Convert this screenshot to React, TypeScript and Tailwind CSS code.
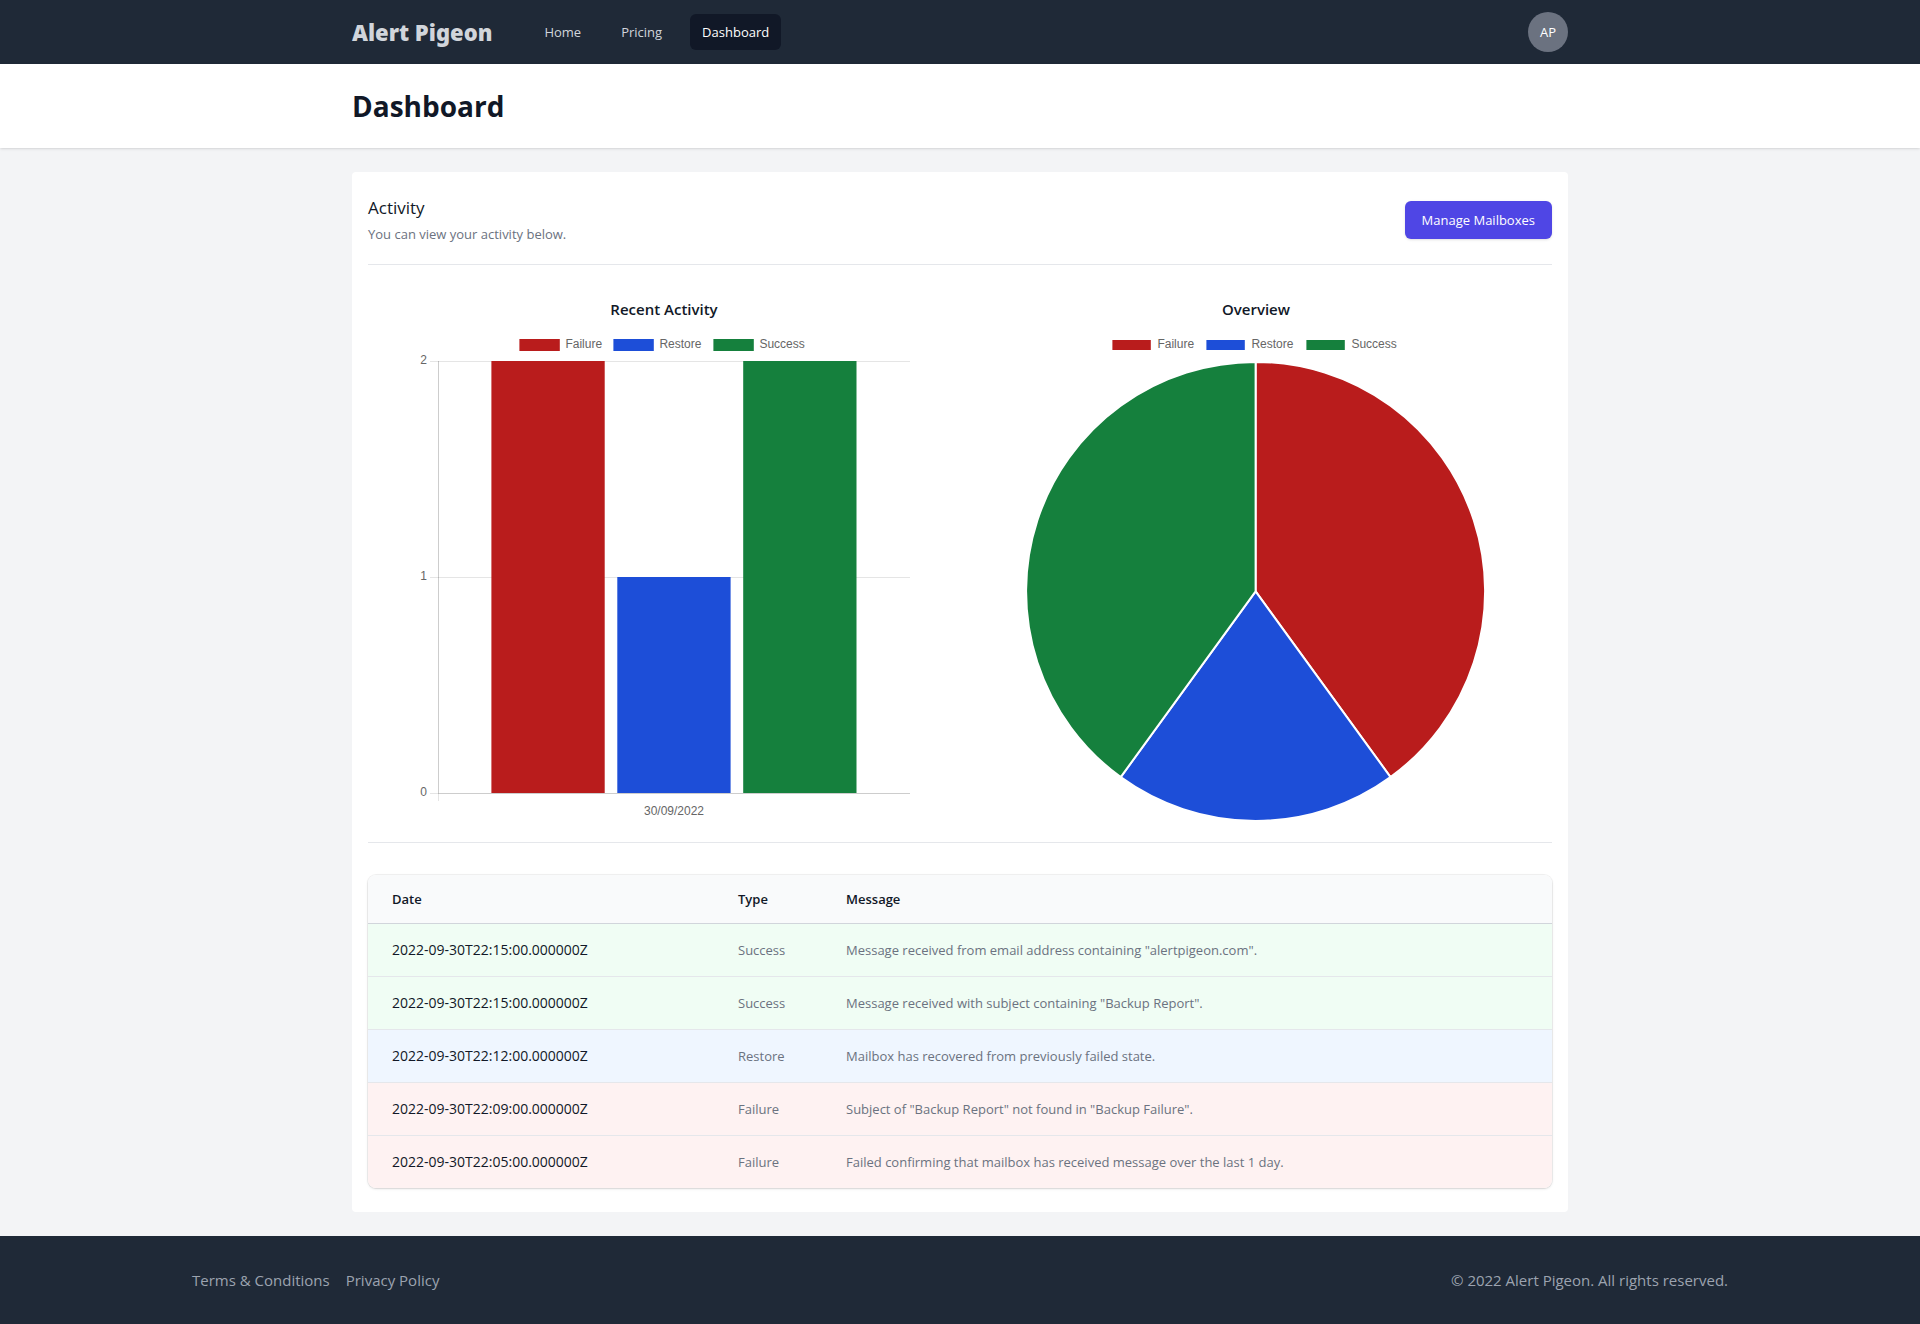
type ActivityType = "Success" | "Restore" | "Failure";

type ActivityItem = {
  date: string;
  type: ActivityType;
  message: string;
};

const navigation = [
  { name: "Home", href: "#home", current: false },
  { name: "Pricing", href: "#pricing", current: false },
  { name: "Dashboard", href: "#dashboard", current: true },
];

const activity: ActivityItem[] = [
  {
    date: "2022-09-30T22:15:00.000000Z",
    type: "Success",
    message: 'Message received from email address containing "alertpigeon.com".',
  },
  {
    date: "2022-09-30T22:15:00.000000Z",
    type: "Success",
    message: 'Message received with subject containing "Backup Report".',
  },
  {
    date: "2022-09-30T22:12:00.000000Z",
    type: "Restore",
    message: "Mailbox has recovered from previously failed state.",
  },
  {
    date: "2022-09-30T22:09:00.000000Z",
    type: "Failure",
    message: 'Subject of "Backup Report" not found in "Backup Failure".',
  },
  {
    date: "2022-09-30T22:05:00.000000Z",
    type: "Failure",
    message: "Failed confirming that mailbox has received message over the last 1 day.",
  },
];

const rowColors: Record<ActivityType, string> = {
  Success: "bg-[#f0fdf4]",
  Restore: "bg-[#eff6ff]",
  Failure: "bg-[#fef2f2]",
};

const series = [
  { label: "Failure", value: 2, color: "#b91c1c" },
  { label: "Restore", value: 1, color: "#1d4ed8" },
  { label: "Success", value: 2, color: "#15803d" },
];

const chartText = "fill-[#666666] font-['Liberation_Sans',Arial,sans-serif] text-[12px]";

function Legend({ inset }: { inset: number }) {
  const xs = [103.4, 197.4, 297.4];

  return (
    <g>
      {series.map((item, i) => (
        <g key={item.label}>
          <rect
            x={xs[i] + inset}
            y={10 + inset}
            width={40.4 - inset * 2}
            height={12 - inset * 2}
            fill={item.color}
          />
          <text x={xs[i] + 46} y={19} className={chartText}>
            {item.label}
          </text>
        </g>
      ))}
    </g>
  );
}

function BarChart() {
  const bottom = 464;
  const unit = 216;

  return (
    <svg viewBox="0 0 496 496" className="block w-full" role="img" aria-label="Recent Activity">
      <Legend inset={0} />

      {[0, 1, 2].map((tick) => (
        <g key={tick}>
          <rect x={14} y={bottom - tick * unit} width={480} height={1} fill="#000" opacity={0.1} />
          <text x={11} y={bottom - tick * unit + 3} textAnchor="end" className={chartText}>
            {tick}
          </text>
        </g>
      ))}

      <rect x={22} y={32} width={1} height={440} fill="#000" opacity={0.1} />
      <rect x={22} y={32} width={1} height={432} fill="#000" opacity={0.1} />
      <rect x={22} y={bottom} width={472} height={1} fill="#000" opacity={0.1} />

      {series.map((item, i) => (
        <rect
          key={item.label}
          x={75.4 + i * 125.9}
          y={bottom - item.value * unit}
          width={113.3}
          height={item.value * unit}
          fill={item.color}
        />
      ))}

      <text x={258} y={486} textAnchor="middle" className={chartText}>
        30/09/2022
      </text>
    </svg>
  );
}

function PieChart() {
  const cx = 247.6;
  const cy = 262.4;
  const r = 229.5;
  const total = series.reduce((sum, item) => sum + item.value, 0);

  function point(fraction: number) {
    const angle = fraction * Math.PI * 2 - Math.PI / 2;
    return `${cx + r * Math.cos(angle)} ${cy + r * Math.sin(angle)}`;
  }

  let start = 0;

  return (
    <svg viewBox="0 0 496 496" className="block w-full" role="img" aria-label="Overview">
      <Legend inset={1} />
      {series.map((item) => {
        const end = start + item.value / total;
        const d = `M${cx} ${cy} L${point(start)} A${r} ${r} 0 0 1 ${point(end)} Z`;
        start = end;
        return (
          <path
            key={item.label}
            d={d}
            fill={item.color}
            stroke="#fff"
            strokeWidth={2}
            strokeLinejoin="bevel"
          />
        );
      })}
    </svg>
  );
}

export default function App() {
  return (
    <div className="flex min-h-screen flex-col bg-[#f3f4f6] font-['Open_Sans','Noto_Sans',sans-serif] text-[13px] leading-5 text-[#111827]">
      <nav className="bg-[#1f2937]">
        <div className="mx-auto flex h-16 max-w-7xl items-center justify-between px-8">
          <div className="flex items-center">
            <a
              href="#home"
              className="font-['Noto_Sans','Open_Sans',sans-serif] text-[22px] leading-8 font-black text-[#d1d5db]"
            >
              Alert Pigeon
            </a>
            <div className="ml-10 flex items-center gap-4">
              {navigation.map((item) => (
                <a
                  key={item.name}
                  href={item.href}
                  aria-current={item.current ? "page" : undefined}
                  className={
                    item.current
                      ? "rounded-md bg-[#111827] px-3 py-2 text-white"
                      : "rounded-md px-3 py-2 text-[#d1d5db] hover:bg-[#374151] hover:text-white"
                  }
                >
                  {item.name}
                </a>
              ))}
            </div>
          </div>
          <button
            type="button"
            aria-label="Open user menu"
            className="flex h-10 w-10 items-center justify-center rounded-full bg-[#6b7280] text-white"
          >
            AP
          </button>
        </div>
      </nav>

      <header className="relative bg-white shadow">
        <div className="mx-auto max-w-7xl px-8 py-6">
          <h1 className="text-[28px] leading-9 font-bold">Dashboard</h1>
        </div>
      </header>

      <main className="grow">
        <div className="mx-auto max-w-7xl px-8 py-6">
          <div className="rounded bg-white px-4 py-6">
            <div className="flex items-center justify-between border-b border-[#e5e7eb] pb-5">
              <div>
                <h2 className="text-[17px] leading-6">Activity</h2>
                <p className="mt-1 text-[#6b7280]">You can view your activity below.</p>
              </div>
              <button
                type="button"
                className="rounded-md border border-transparent bg-[#4f46e5] px-4 py-2 text-white shadow-sm hover:bg-[#4338ca]"
              >
                Manage Mailboxes
              </button>
            </div>

            <div className="grid grid-cols-2 border-b border-[#e5e7eb] pt-8 pb-[17px]">
              <div className="px-12">
                <h3 className="mb-2 text-center text-[15px] leading-6 font-semibold">
                  Recent Activity
                </h3>
                <BarChart />
              </div>
              <div className="px-12">
                <h3 className="mb-2 text-center text-[15px] leading-6 font-semibold">Overview</h3>
                <PieChart />
              </div>
            </div>

            <div className="mt-8 overflow-hidden rounded-lg shadow ring-1 ring-black/5">
              <table className="w-full">
                <thead className="bg-[#f9fafb]">
                  <tr className="border-b border-[#d1d5db] text-left">
                    <th scope="col" className="w-[358px] py-3.5 pr-3 pl-6 font-semibold">
                      Date
                    </th>
                    <th scope="col" className="w-[108px] px-3 py-3.5 font-semibold">
                      Type
                    </th>
                    <th scope="col" className="px-3 py-3.5 font-semibold">
                      Message
                    </th>
                  </tr>
                </thead>
                <tbody className="divide-y divide-[#e5e7eb]">
                  {activity.map((item, i) => (
                    <tr key={i} className={rowColors[item.type]}>
                      <td className="py-4 pr-3 pl-6 text-sm whitespace-nowrap">{item.date}</td>
                      <td className="px-3 py-4 whitespace-nowrap text-[#6b7280]">{item.type}</td>
                      <td className="px-3 py-4 text-[#6b7280]">{item.message}</td>
                    </tr>
                  ))}
                </tbody>
              </table>
            </div>
          </div>
        </div>
      </main>

      <footer className="bg-[#1f2937] py-8 text-[15px] leading-6 text-[#9ca3af]">
        <div className="mx-auto flex max-w-[1536px] justify-between">
          <div className="flex gap-4">
            <a href="#terms" className="hover:text-white">
              Terms &amp; Conditions
            </a>
            <a href="#privacy" className="hover:text-white">
              Privacy Policy
            </a>
          </div>
          <p>© 2022 Alert Pigeon. All rights reserved.</p>
        </div>
      </footer>
    </div>
  );
}
